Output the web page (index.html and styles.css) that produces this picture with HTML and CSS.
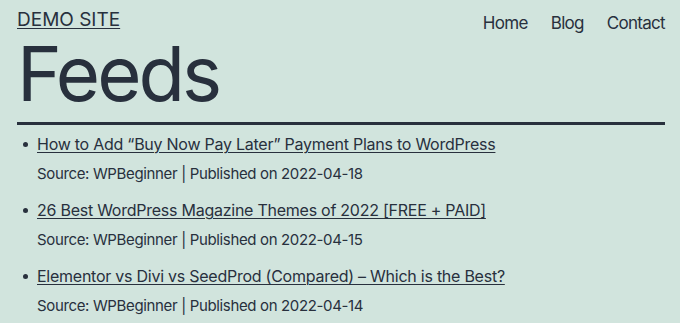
FILE: index.html
```html
<!DOCTYPE html>
<html lang="en">
<head>
<meta charset="utf-8">
<title>Feeds – Demo Site</title>
<link rel="stylesheet" href="styles.css">
</head>
<body>
<div class="page">
  <header class="site-header">
    <a class="site-title" href="#">DEMO SITE</a>
    <nav class="site-nav">
      <a href="#">Home</a>
      <a href="#">Blog</a>
      <a href="#">Contact</a>
    </nav>
  </header>
  <h1 class="page-title">Feeds</h1>
  <hr class="rule">
  <ul class="feed">
    <li class="feed-item">
      <a class="feed-link" href="#">How to Add “Buy Now Pay Later” Payment Plans to WordPress</a>
      <p class="feed-meta">Source: WPBeginner | Published on 2022-04-18</p>
    </li>
    <li class="feed-item">
      <a class="feed-link" href="#">26 Best WordPress Magazine Themes of 2022 [FREE + PAID]</a>
      <p class="feed-meta">Source: WPBeginner | Published on 2022-04-15</p>
    </li>
    <li class="feed-item">
      <a class="feed-link" href="#">Elementor vs Divi vs SeedProd (Compared) – Which is the Best?</a>
      <p class="feed-meta">Source: WPBeginner | Published on 2022-04-14</p>
    </li>
  </ul>
</div>
</body>
</html>
```

FILE: styles.css
```css
html, body {
  margin: 0;
  padding: 0;
}
body {
  background: #d1e4dd;
  color: #28303d;
  font-family: Inter, "Noto Sans", sans-serif;
}
a {
  color: #28303d;
}
.page {
  padding: 0 15px 0 17px;
}
.site-header {
  display: flex;
  justify-content: space-between;
  align-items: flex-start;
  padding-top: 7px;
}
.site-title {
  font-size: 19px;
  line-height: 26px;
  text-decoration: underline;
  text-decoration-thickness: 1px;
  text-underline-offset: 2px;
}
.site-nav {
  display: flex;
  gap: 23px;
  padding-top: 4px;
}
.site-nav a {
  font-size: 17px;
  line-height: 24px;
  letter-spacing: -0.7px;
  text-decoration: none;
}
.page-title {
  margin: 0;
  font-size: 76px;
  font-weight: 400;
  line-height: 76px;
  letter-spacing: -3px;
}
.rule {
  margin: 11px 0 0;
  border: 0;
  height: 3px;
  background: #28303d;
}
.feed {
  margin: 0;
  padding: 0 0 0 20px;
  list-style: none;
}
.feed-item {
  padding-top: 7px;
  height: 59px;
}
.feed-item::before {
  content: "";
  float: left;
  width: 5px;
  height: 5px;
  border-radius: 50%;
  background: #28303d;
  margin: 9.5px 9.5px 0 -14.5px;
}
.feed-link {
  font-size: 16px;
  line-height: 24px;
  letter-spacing: -0.25px;
  text-decoration-thickness: 1px;
  text-underline-offset: 2px;
}
.feed-meta {
  margin: 7px 0 0;
  font-size: 15px;
  line-height: 22px;
  letter-spacing: -0.35px;
}
```
